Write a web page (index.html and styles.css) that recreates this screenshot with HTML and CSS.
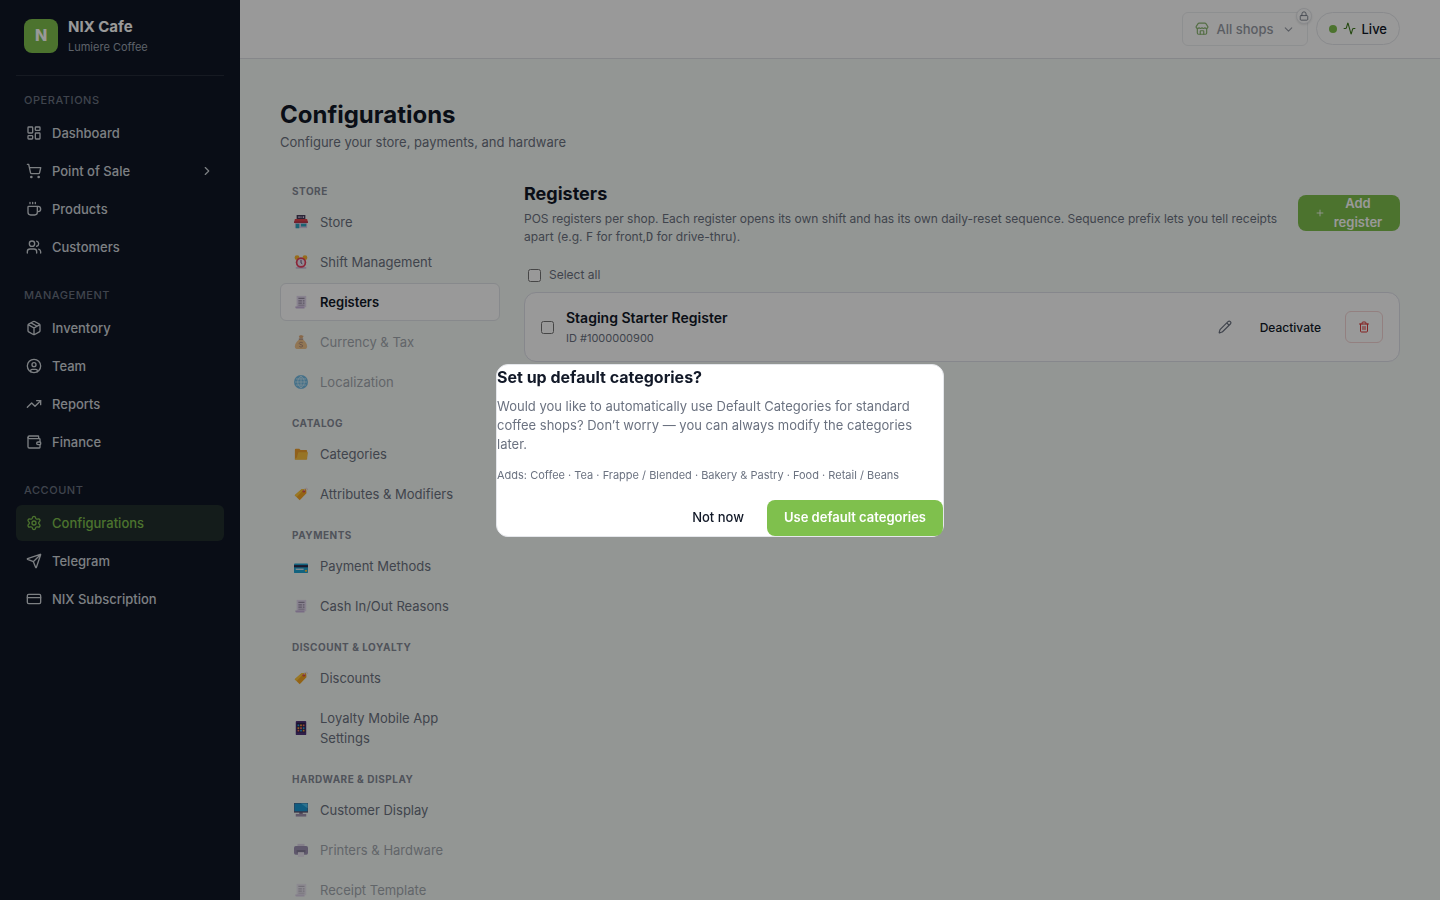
FILE: index.html
```html
<!DOCTYPE html>
<html lang="en">
<head>
    <meta charset="UTF-8">
    <meta name="viewport" content="width=device-width, initial-scale=1.0">
    <title>Configurations - NIX Cafe</title>
    <link rel="stylesheet" href="styles.css">
</head>
<body>
    <!-- emoji style icons, used more than once -->
    <svg class="sprite" aria-hidden="true">
        <symbol id="e-receipt" viewBox="0 0 16 16">
            <path fill="#e3d9ee" d="M3 1h11v13H3z"/>
            <path fill="#c9b5dc" d="M1.500 13h10.500v2.500H3a1.500 1.500 0 0 1-1.500-1.500z"/>
            <path fill="#998ea6" d="M5 3h7v1.500H5zM5 6h4v1.500H5zM10 6h2v1.500h-2zM5 8.500h4V10H5zM10 8.500h2V10h-2zM5 11h7v1H5z"/>
        </symbol>
        <symbol id="e-tag" viewBox="0 0 16 16">
            <path fill="#f5a623" d="M8.500 2.500 13 2l1 1 .2 4-7.700 8L.8 9.500z"/>
            <path fill="#ffc83d" d="M8.500 2.500 12 2.200 3 11.500.8 9.500z"/>
            <circle cx="11.300" cy="4.800" r="1.500" fill="#e0434b"/>
            <path fill="none" stroke="#e6d3e0" d="M11.300 4.800C12 1 16 0 15.500 3.500"/>
        </symbol>
    </svg>

    <div class="app">
        <aside class="sidebar">
            <div class="brand">
                <div class="brand-logo">N</div>
                <div>
                    <div class="brand-name">NIX Cafe</div>
                    <div class="brand-sub">Lumiere Coffee</div>
                </div>
            </div>

            <nav class="menu">
                <div class="menu-label">Operations</div>
                <a class="menu-item" href="#">
                    <svg class="icon" viewBox="0 0 24 24"><rect width="7" height="9" x="3" y="3" rx="1"/><rect width="7" height="5" x="14" y="3" rx="1"/><rect width="7" height="9" x="14" y="12" rx="1"/><rect width="7" height="5" x="3" y="16" rx="1"/></svg>
                    Dashboard
                </a>
                <a class="menu-item" href="#">
                    <svg class="icon" viewBox="0 0 24 24"><circle cx="8" cy="21" r="1"/><circle cx="19" cy="21" r="1"/><path d="M2.050 2.050h2l2.660 12.420a2 2 0 0 0 2 1.580h9.780a2 2 0 0 0 1.950-1.570l1.650-7.430H5.120"/></svg>
                    Point of Sale
                    <svg class="icon icon-sm chevron" viewBox="0 0 24 24"><path d="m9 18 6-6-6-6"/></svg>
                </a>
                <a class="menu-item" href="#">
                    <svg class="icon" viewBox="0 0 24 24"><path d="M10 2v2M14 2v2M6 2v2M16 8a1 1 0 0 1 1 1v8a4 4 0 0 1-4 4H7a4 4 0 0 1-4-4V9a1 1 0 0 1 1-1h14a4 4 0 1 1 0 8h-1"/></svg>
                    Products
                </a>
                <a class="menu-item" href="#">
                    <svg class="icon" viewBox="0 0 24 24"><path d="M16 21v-2a4 4 0 0 0-4-4H6a4 4 0 0 0-4 4v2"/><circle cx="9" cy="7" r="4"/><path d="M22 21v-2a4 4 0 0 0-3-3.870M16 3.130a4 4 0 0 1 0 7.750"/></svg>
                    Customers
                </a>

                <div class="menu-label">Management</div>
                <a class="menu-item" href="#">
                    <svg class="icon" viewBox="0 0 24 24"><path d="M11 21.730a2 2 0 0 0 2 0l7-4A2 2 0 0 0 21 16V8a2 2 0 0 0-1-1.730l-7-4a2 2 0 0 0-2 0l-7 4A2 2 0 0 0 3 8v8a2 2 0 0 0 1 1.730zM12 22V12M3.300 7 12 12l8.700-5M7.500 4.270l9 5.150"/></svg>
                    Inventory
                </a>
                <a class="menu-item" href="#">
                    <svg class="icon" viewBox="0 0 24 24"><circle cx="12" cy="12" r="10"/><circle cx="12" cy="10" r="3"/><path d="M7 20.660V19a2 2 0 0 1 2-2h6a2 2 0 0 1 2 2v1.660"/></svg>
                    Team
                </a>
                <a class="menu-item" href="#">
                    <svg class="icon" viewBox="0 0 24 24"><path d="m22 7-8.500 8.500-5-5L2 17"/><path d="M16 7h6v6"/></svg>
                    Reports
                </a>
                <a class="menu-item" href="#">
                    <svg class="icon" viewBox="0 0 24 24"><path d="M19 7V4a1 1 0 0 0-1-1H5a2 2 0 0 0 0 4h15a1 1 0 0 1 1 1v4h-3a2 2 0 0 0 0 4h3a1 1 0 0 0 1-1v-2a1 1 0 0 0-1-1"/><path d="M3 5v14a2 2 0 0 0 2 2h15a1 1 0 0 0 1-1v-4"/></svg>
                    Finance
                </a>

                <div class="menu-label">Account</div>
                <a class="menu-item active" href="#" aria-current="page">
                    <svg class="icon" viewBox="0 0 24 24"><path d="M9.670 4.140a2.340 2.340 0 0 1 4.660 0 2.340 2.340 0 0 0 3.320 1.910 2.340 2.340 0 0 1 2.330 4.040 2.340 2.340 0 0 0 0 3.830 2.340 2.340 0 0 1-2.330 4.040 2.340 2.340 0 0 0-3.320 1.910 2.340 2.340 0 0 1-4.660 0 2.340 2.340 0 0 0-3.320-1.910 2.340 2.340 0 0 1-2.330-4.040 2.340 2.340 0 0 0 0-3.830 2.340 2.340 0 0 1 2.330-4.040 2.340 2.340 0 0 0 3.320-1.910"/><circle cx="12" cy="12" r="3"/></svg>
                    Configurations
                </a>
                <a class="menu-item" href="#">
                    <svg class="icon" viewBox="0 0 24 24"><path d="M14.540 21.690a.5.5 0 0 0 .94-.03l6.500-19a.5.5 0 0 0-.64-.64l-19 6.500a.5.5 0 0 0-.02.94l7.930 3.180a2 2 0 0 1 1.110 1.110zM21.850 2.150 10.910 13.080"/></svg>
                    Telegram
                </a>
                <a class="menu-item" href="#">
                    <svg class="icon" viewBox="0 0 24 24"><rect width="20" height="14" x="2" y="5" rx="2"/><path d="M2 10h20"/></svg>
                    NIX Subscription
                </a>
            </nav>
        </aside>

        <div class="main">
            <header class="topbar">
                <div class="shop-picker">
                    <button class="shop-btn" type="button" disabled>
                        <svg class="icon icon-sm shop-icon" viewBox="0 0 24 24"><path d="M15 21v-5a1 1 0 0 0-1-1h-4a1 1 0 0 0-1 1v5"/><path d="M17.770 10.310a1.120 1.120 0 0 0-1.550 0 2.500 2.500 0 0 1-3.450 0 1.120 1.120 0 0 0-1.550 0 2.500 2.500 0 0 1-3.450 0 1.120 1.120 0 0 0-1.550 0 2.500 2.500 0 0 1-3.770-3.250l2.890-4.180A2 2 0 0 1 7 2h10a2 2 0 0 1 1.650.87l2.900 4.190a2.500 2.500 0 0 1-3.780 3.250"/><path d="M4 10.950V19a2 2 0 0 0 2 2h12a2 2 0 0 0 2-2v-8.050"/></svg>
                        All shops
                        <svg class="icon icon-xs" viewBox="0 0 24 24"><path d="m6 9 6 6 6-6"/></svg>
                    </button>
                    <span class="lock-badge">
                        <svg class="icon" viewBox="0 0 24 24"><rect width="18" height="11" x="3" y="11" rx="2"/><path d="M7 11V7a5 5 0 0 1 10 0v4"/></svg>
                    </span>
                </div>
                <button class="live-btn" type="button">
                    <span class="live-dot"></span>
                    <svg class="icon icon-xs" viewBox="0 0 24 24"><path d="M22 12h-2.480a2 2 0 0 0-1.930 1.460l-2.350 8.360a.25.25 0 0 1-.48 0L9.240 2.180a.25.25 0 0 0-.48 0l-2.350 8.360A2 2 0 0 1 4.490 12H2"/></svg>
                    Live
                </button>
            </header>

            <main class="page">
                <h1>Configurations</h1>
                <p class="page-sub">Configure your store, payments, and hardware</p>

                <div class="config">
                    <nav class="config-nav">
                        <section>
                            <h3>Store</h3>
                            <a href="#">
                                <svg class="emoji" viewBox="0 0 16 16"><path fill="#463c5a" d="M3 0h10v5H3z"/><path fill="#d8cbe6" d="M5 1.500h1.500v2H5zM7.500 1.500h1v2h-1zM10 1.500h1.500v2H10z"/><path fill="#d9c9e4" d="M1 7h14v8H1z"/><path fill="#e0434b" d="M1 4.500h14l1 4H0z"/><path fill="#b52e45" d="M0 7.500h16v1.500H0z"/><path fill="#2fa6bf" d="M2 10h4v5H2zM8 10h6v3H8z"/></svg>
                                Store
                            </a>
                            <a href="#">
                                <svg class="emoji" viewBox="0 0 16 16"><path fill="#c9b5dc" d="M2 14h12v1.500H2z"/><circle cx="3.500" cy="3" r="2.800" fill="#fcb62d"/><circle cx="12.500" cy="3" r="2.800" fill="#fcb62d"/><circle cx="8" cy="8.500" r="6" fill="#e8405f"/><circle cx="8" cy="8.500" r="4" fill="#efe6f5"/><path fill="none" stroke="#52406e" d="M8 5.500v3.500l1.500 1"/></svg>
                                Shift Management
                            </a>
                            <a class="active" href="#" aria-current="true">
                                <svg class="emoji"><use href="#e-receipt"/></svg>
                                Registers
                            </a>
                            <a class="locked" href="#">
                                <svg class="emoji" viewBox="0 0 16 16"><path fill="#f0a347" d="M6 5h4c3 2 5 5 5 8 0 2-1.500 3-3 3H4c-1.500 0-3-1-3-3 0-3 2-6 5-8z"/><path fill="#d67d2c" d="M5.500 1 8 0l3 1-1.500 3h-3z"/><path fill="#8a4b2a" d="M5.500 4h5v1.500h-5z"/><path fill="none" stroke="#7a3e22" d="M10 9c-1-1-4-.8-4 .7 0 1.600 4 1 4 2.800 0 1.500-3 1.600-4 .5"/></svg>
                                Currency &amp; Tax
                            </a>
                            <a class="locked" href="#">
                                <svg class="emoji" viewBox="0 0 16 16"><circle cx="8" cy="8" r="8" fill="#1f94d8"/><path fill="none" stroke="#b5e3fa" stroke-width=".9" d="M8 1v14M1 8h14M2.200 4.500h11.600M2.200 11.500h11.600M8 1c-5 4-5 10 0 14M8 1c5 4 5 10 0 14"/></svg>
                                Localization
                            </a>
                        </section>
                        <section>
                            <h3>Catalog</h3>
                            <a href="#">
                                <svg class="emoji" viewBox="0 0 16 16"><path fill="#f0a02d" d="M1 3c0-.6.400-1 1-1h4l1.500 1.500H14c.6 0 1 .4 1 1V14H1z"/><path fill="#fcc13f" d="M5 6h11l-1.500 8.500H1V13c2 0 2.500-1 2.800-3z"/></svg>
                                Categories
                            </a>
                            <a href="#">
                                <svg class="emoji"><use href="#e-tag"/></svg>
                                Attributes &amp; Modifiers
                            </a>
                        </section>
                        <section>
                            <h3>Payments</h3>
                            <a href="#">
                                <svg class="emoji" viewBox="0 0 16 16"><rect y="5" width="16" height="11" rx="1" fill="#1fa5d4"/><path fill="#2b2a4c" d="M0 7h16v2.500H0z"/><path fill="#d9e6ef" d="M2 11h9v1.500H2z"/><path fill="#fcc13f" d="M12.500 12.500H15v2h-2.500z"/></svg>
                                Payment Methods
                            </a>
                            <a href="#">
                                <svg class="emoji"><use href="#e-receipt"/></svg>
                                Cash In/Out Reasons
                            </a>
                        </section>
                        <section>
                            <h3>Discount &amp; Loyalty</h3>
                            <a href="#">
                                <svg class="emoji"><use href="#e-tag"/></svg>
                                Discounts
                            </a>
                            <a href="#">
                                <svg class="emoji" viewBox="0 0 16 16"><rect x="2" width="12" height="16" rx="1" fill="#50347c"/><path fill="#2c1f4c" d="M3 2h10v11H3z"/><path fill="#2aa7e0" d="M4 4h2v2H4zM10 7h2v2h-2zM7 10h2v2H7z"/><path fill="#f7a03a" d="M7 4h2v2H7zM4 7h2v2H4zM10 10h2v2h-2z"/><path fill="#f2725f" d="M10 4h2v2h-2zM7 7h2v2H7zM4 10h2v2H4z"/></svg>
                                Loyalty Mobile App Settings
                            </a>
                        </section>
                        <section>
                            <h3>Hardware &amp; Display</h3>
                            <a href="#">
                                <svg class="emoji" viewBox="0 0 16 16"><path fill="#8a7d99" d="M6 10h4v3H6z"/><path fill="#a396b2" d="M2 12.500h12v3H2z"/><path fill="#5f5573" d="M0 0h16v11H0z"/><path fill="#1b9ad6" d="M.5.500h15v9H.5z"/><path fill="#4cc0ee" d="M8 .5h7.500V6z"/></svg>
                                Customer Display
                            </a>
                            <a class="locked" href="#">
                                <svg class="emoji" viewBox="0 0 16 16"><path fill="#cbbbdc" d="M4 1h8v5H4z"/><rect y="3.500" width="16" height="10" rx="2" fill="#65508a"/><path fill="#3c2e5c" d="M3 8h10v3H3z"/><path fill="#e6dcf0" d="M4.500 10.500h7V16h-7z"/></svg>
                                Printers &amp; Hardware
                            </a>
                            <a class="locked" href="#">
                                <svg class="emoji"><use href="#e-receipt"/></svg>
                                Receipt Template
                            </a>
                        </section>
                    </nav>

                    <section class="registers">
                        <div class="registers-head">
                            <div>
                                <h2>Registers</h2>
                                <p>POS registers per shop. Each register opens its own shift and has its own daily-reset sequence. Sequence prefix lets you tell receipts apart (e.g. <code>F</code> for front,<code>D</code> for drive-thru).</p>
                            </div>
                            <button class="btn btn-primary btn-add" type="button">
                                <svg class="icon" viewBox="0 0 24 24"><path d="M5 12h14M12 5v14"/></svg>
                                <span>Add register</span>
                            </button>
                        </div>

                        <label class="select-all">
                            <input type="checkbox">
                            Select all
                        </label>

                        <div class="register-card">
                            <input type="checkbox" id="reg-1">
                            <label class="register-info" for="reg-1">
                                <span class="register-name">Staging Starter Register</span>
                                <span class="register-id">ID #1000000900</span>
                            </label>
                            <button class="btn-icon" type="button" aria-label="Edit">
                                <svg class="icon icon-sm" viewBox="0 0 24 24"><path d="M21.170 6.810a1 1 0 0 0-3.990-3.990L3.840 16.170a2 2 0 0 0-.5.830l-1.320 4.350a.5.5 0 0 0 .62.62l4.350-1.320a2 2 0 0 0 .83-.5zM15 5l4 4"/></svg>
                            </button>
                            <button class="btn-text" type="button">Deactivate</button>
                            <button class="btn-delete" type="button" aria-label="Delete">
                                <svg class="icon" viewBox="0 0 24 24"><path d="M3 6h18M19 6v14a2 2 0 0 1-2 2H7a2 2 0 0 1-2-2V6M8 6V4a2 2 0 0 1 2-2h4a2 2 0 0 1 2 2v2M10 11v6M14 11v6"/></svg>
                            </button>
                        </div>
                    </section>
                </div>
            </main>
        </div>
    </div>

    <div class="overlay">
        <div class="dialog" role="dialog" aria-modal="true" aria-labelledby="dialog-title">
            <h2 id="dialog-title">Set up default categories?</h2>
            <p class="dialog-text">Would you like to automatically use Default Categories for standard coffee shops? Don’t worry — you can always modify the categories later.</p>
            <p class="dialog-note">Adds: Coffee · Tea · Frappe / Blended · Bakery &amp; Pastry · Food · Retail / Beans</p>
            <div class="dialog-actions">
                <button class="btn btn-ghost" type="button">Not now</button>
                <button class="btn btn-primary" type="button">Use default categories</button>
            </div>
        </div>
    </div>
</body>
</html>
```
FILE: styles.css
```css
* {
    box-sizing: border-box;
}
body {
    margin: 0;
    font-family: Inter, "Liberation Sans", sans-serif;
    font-size: 13px;
    color: #111827;
    background: #f6faf7;
}
h1, h2, h3, p {
    margin: 0;
}
a {
    color: inherit;
    text-decoration: none;
}
button {
    font: inherit;
    color: inherit;
    background: none;
    border: none;
    padding: 0;
    cursor: pointer;
}
input[type="checkbox"] {
    margin: 0;
    width: 13px;
    height: 13px;
}
.sprite {
    display: none;
}
.icon {
    width: 16px;
    height: 16px;
    flex: none;
    fill: none;
    stroke: currentColor;
    stroke-width: 2;
    stroke-linecap: round;
    stroke-linejoin: round;
}
.icon-sm {
    width: 14px;
    height: 14px;
}
.icon-xs {
    width: 13px;
    height: 13px;
}
.emoji {
    width: 14px;
    height: 14px;
    flex: none;
}

.app {
    display: flex;
    height: 100vh;
    overflow: hidden;
}

/* sidebar */
.sidebar {
    width: 240px;
    flex: none;
    padding: 16px;
    background: #0f1726;
    color: #d1d5db;
}
.brand {
    display: flex;
    align-items: center;
    gap: 10px;
    height: 60px;
    padding: 0 8px 20px;
    border-bottom: 1px solid #252c39;
}
.brand-logo {
    width: 34px;
    height: 34px;
    border-radius: 8px;
    background: #7fc04d;
    color: #fff;
    font-size: 16px;
    font-weight: 800;
    line-height: 32px;
    text-align: center;
}
.brand-name {
    color: #fff;
    font-size: 15px;
    font-weight: 700;
    line-height: 22px;
}
.brand-sub {
    color: #9ca3af;
    font-size: 11px;
    line-height: 18px;
}
.menu {
    display: flex;
    flex-direction: column;
    gap: 2px;
    padding-top: 15px;
}
.menu-label {
    padding: 1px 8px 5px;
    color: #6b7280;
    font-size: 11px;
    font-weight: 500;
    line-height: 16px;
    letter-spacing: 0.05em;
    text-transform: uppercase;
}
.menu-item + .menu-label {
    margin-top: 19px;
}
.menu-item {
    display: flex;
    align-items: center;
    gap: 10px;
    height: 36px;
    padding: 0 10px;
    border-radius: 6px;
    font-size: 13px;
    font-weight: 500;
}
.menu-item.active {
    background: #222f2d;
    color: #7fc04d;
}
.chevron {
    margin-left: auto;
}

/* top bar */
.main {
    flex: 1;
    min-width: 0;
    display: flex;
    flex-direction: column;
}
.topbar {
    flex: none;
    display: flex;
    align-items: flex-start;
    justify-content: flex-end;
    gap: 8px;
    height: 59px;
    padding: 12px 40px;
    background: #fff;
    border-bottom: 1px solid #dfe2e6;
}
.shop-picker {
    position: relative;
}
.shop-btn {
    display: flex;
    align-items: center;
    gap: 8px;
    height: 34px;
    padding: 0 12px;
    border: 1px solid #e5e7eb;
    border-radius: 6px;
    color: #6b7280;
    font-weight: 500;
    opacity: 0.7;
}
.shop-icon {
    color: #5c9a36;
}
.lock-badge {
    position: absolute;
    top: -4px;
    right: -4px;
    display: flex;
    align-items: center;
    justify-content: center;
    width: 16px;
    height: 16px;
    border: 1px solid #e5e7eb;
    border-radius: 50%;
    background: #fff;
    color: #6b7280;
    box-shadow: 0 1px 2px rgba(0, 0, 0, 0.1);
}
.lock-badge .icon {
    width: 10px;
    height: 10px;
}
.live-btn {
    display: flex;
    align-items: center;
    gap: 6px;
    height: 33px;
    padding: 0 12px;
    border: 1px solid #e5e7eb;
    border-radius: 17px;
    font-weight: 500;
}
.live-btn .icon {
    color: #3f7a1d;
}
.live-dot {
    width: 8px;
    height: 8px;
    border-radius: 50%;
    background: #7fc04d;
}

/* page */
.page {
    flex: 1;
    padding: 40px;
    overflow: hidden;
}
h1 {
    font-size: 24px;
    font-weight: 700;
    line-height: 32px;
}
.page-sub {
    margin-top: 1px;
    color: #6b7280;
    line-height: 20px;
}
.config {
    display: flex;
    align-items: flex-start;
    gap: 24px;
    margin-top: 31px;
}

/* settings navigation */
.config-nav {
    width: 220px;
    flex: none;
    display: flex;
    flex-direction: column;
    gap: 14px;
}
.config-nav section {
    display: flex;
    flex-direction: column;
    gap: 2px;
}
.config-nav h3 {
    margin-bottom: 2px;
    padding: 0 12px;
    color: #858b97;
    font-size: 10px;
    font-weight: 700;
    line-height: 16px;
    letter-spacing: 0.05em;
    text-transform: uppercase;
}
.config-nav a {
    display: flex;
    align-items: center;
    gap: 12px;
    padding: 8px 13px;
    border: 1px solid transparent;
    border-radius: 6px;
    color: #6b7280;
    line-height: 20px;
}
.config-nav a.active {
    background: #fff;
    border-color: #e2e5e9;
    color: #111827;
    font-weight: 600;
}
.config-nav a.locked {
    opacity: 0.6;
}

/* registers */
.registers {
    flex: 1;
    min-width: 0;
}
.registers-head {
    display: flex;
    align-items: flex-start;
    gap: 16px;
}
.registers-head h2 {
    font-size: 18px;
    font-weight: 700;
    line-height: 22px;
}
.registers-head p {
    margin-top: 5px;
    color: #6b7280;
    font-size: 12px;
    line-height: 18px;
}
.registers-head code {
    font-family: "DejaVu Sans Mono", monospace;
    font-size: 12px;
    line-height: 12px;
}
.btn {
    display: inline-flex;
    align-items: center;
    justify-content: center;
    gap: 8px;
    height: 36px;
    padding: 0 17px;
    border-radius: 8px;
    font-size: 13px;
    font-weight: 500;
    line-height: 19px;
}
.btn-primary {
    background: #7fc04d;
    color: #fff;
    font-weight: 600;
}
.btn-add {
    flex: none;
    width: 102px;
    margin-top: 12px;
}
.btn-add .icon {
    width: 10px;
    height: 10px;
}
.select-all {
    display: flex;
    align-items: center;
    gap: 8px;
    margin-top: 20px;
    padding: 0 4px;
    color: #6b7280;
    font-size: 12px;
    line-height: 18px;
}
.register-card {
    display: flex;
    align-items: center;
    margin-top: 8px;
    height: 70px;
    padding: 0 16px;
    border: 1px solid #dfe1ea;
    border-radius: 12px;
    background: #fff;
}
.register-info {
    display: flex;
    flex-direction: column;
    flex: 1;
    margin-left: 12px;
}
.register-name {
    font-size: 14px;
    font-weight: 600;
    line-height: 22px;
}
.register-id {
    color: #6b7280;
    font-size: 11px;
    line-height: 18px;
}
.btn-icon {
    display: flex;
    padding: 8px;
    color: #6b7280;
}
.btn-text {
    padding: 8px 20px;
    font-size: 12px;
    font-weight: 500;
}
.btn-delete {
    display: flex;
    align-items: center;
    justify-content: center;
    width: 38px;
    height: 32px;
    margin-left: 4px;
    border: 1px solid #f6d5d5;
    border-radius: 6px;
    color: #dc3838;
}
.btn-delete .icon {
    width: 12px;
    height: 12px;
}

/* dialog */
.overlay {
    position: fixed;
    inset: 0;
    display: flex;
    align-items: center;
    justify-content: center;
    background: rgba(0, 0, 0, 0.4);
}
.dialog {
    width: 448px;
    border: 1px solid #e5e7eb;
    border-radius: 12px;
    background: #fff;
}
.dialog h2 {
    font-size: 16px;
    font-weight: 700;
    line-height: 24px;
}
.dialog-text {
    margin-top: 8px;
    color: #6b7280;
    font-size: 13px;
    line-height: 19px;
}
.dialog-note {
    margin-top: 12px;
    color: #6b7280;
    font-size: 11px;
    line-height: 18px;
}
.dialog-actions {
    display: flex;
    justify-content: flex-end;
    gap: 6px;
    margin-top: 16px;
}
```
